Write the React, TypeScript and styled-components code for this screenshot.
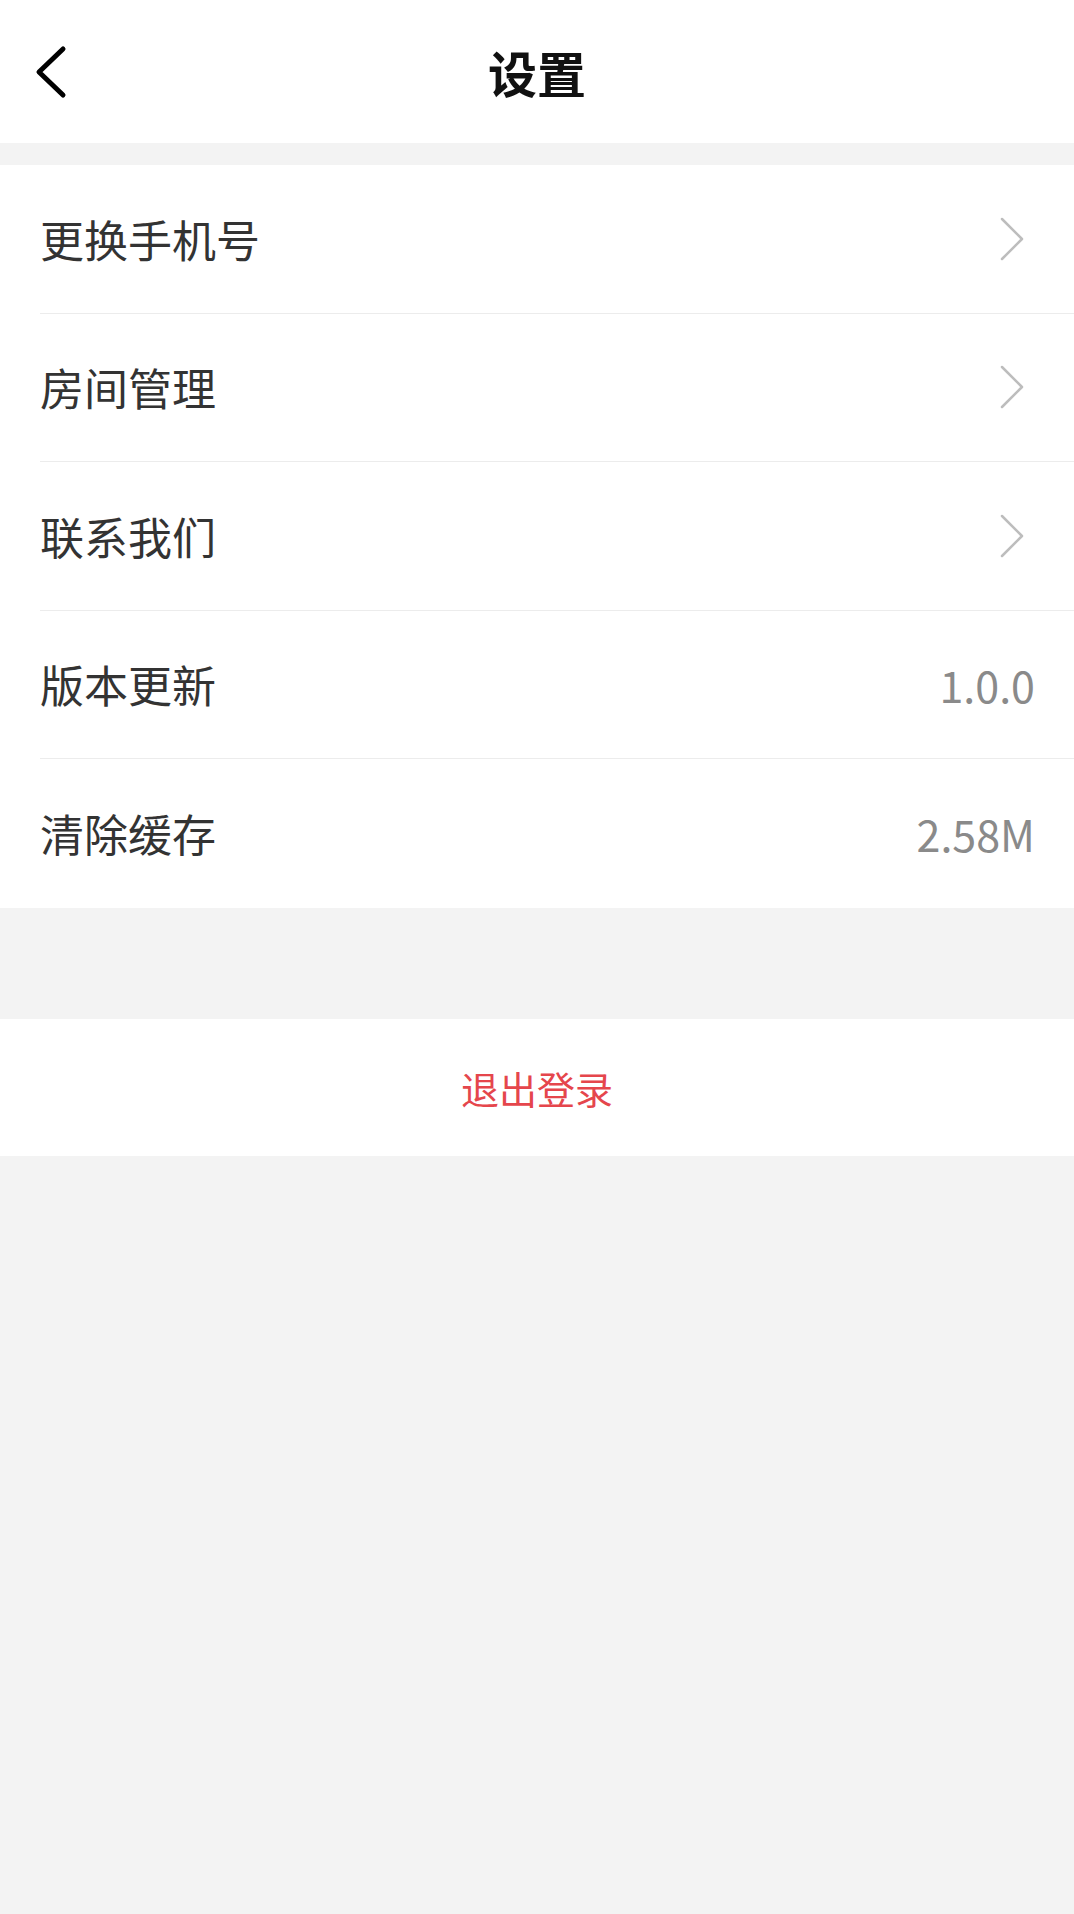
import React from "react";
import styled, { createGlobalStyle } from "styled-components";

const GlobalStyle = createGlobalStyle`
  html, body {
    margin: 0;
    padding: 0;
    background: #f3f3f3;
    font-family: "Noto Sans CJK SC", "Noto Sans", sans-serif;
  }
  * { box-sizing: border-box; }
`;

const Page = styled.div`
  width: 1074px;
  min-height: 1914px;
  background: #f3f3f3;
  display: flex;
  flex-direction: column;
`;

const Header = styled.header`
  height: 143px;
  background: #ffffff;
  display: grid;
  grid-template-columns: 120px 1fr 120px;
  align-items: center;
`;

const BackButton = styled.button`
  border: none;
  background: transparent;
  padding: 0 0 0 33px;
  height: 100%;
  display: flex;
  align-items: center;
  cursor: pointer;
`;

const Title = styled.h1`
  margin: 0;
  text-align: center;
  font-size: 49px;
  font-weight: 700;
  color: #111;
  line-height: 1;
`;

const List = styled.section`
  margin-top: 22px;
  background: #ffffff;
  display: flex;
  flex-direction: column;
`;

const Row = styled.div<{ $last?: boolean }>`
  height: 148.5px;
  margin-left: 40px;
  padding-right: 39px;
  display: flex;
  align-items: center;
  justify-content: space-between;
  border-bottom: ${(p) => (p.$last ? "none" : "1px solid #ececec")};
`;

const Label = styled.span`
  font-size: 44px;
  color: #333;
  line-height: 1;
`;

const Value = styled.span`
  font-size: 43px;
  color: #8a8a8a;
  line-height: 1;
`;

const Chevron = styled.svg`
  width: 26px;
  height: 44px;
  margin-right: 10px;
`;

const LogoutBar = styled.button`
  margin-top: 111px;
  height: 137px;
  width: 100%;
  border: none;
  background: #ffffff;
  font-family: "Noto Sans CJK SC", "Noto Sans", sans-serif;
  font-size: 38px;
  color: #e5464c;
  display: flex;
  align-items: center;
  justify-content: center;
  cursor: pointer;
`;

type Item = { label: string; value?: string };

const items: Item[] = [
  { label: "更换手机号" },
  { label: "房间管理" },
  { label: "联系我们" },
  { label: "版本更新", value: "1.0.0" },
  { label: "清除缓存", value: "2.58M" },
];

export default function App() {
  return (
    <Page>
      <GlobalStyle />
      <Header>
        <BackButton aria-label="返回">
          <svg width="34" height="54" viewBox="0 0 34 54">
            <path
              d="M30 4 L6 27 L30 50"
              fill="none"
              stroke="#000"
              strokeWidth="5"
              strokeLinecap="round"
              strokeLinejoin="round"
            />
          </svg>
        </BackButton>
        <Title>设置</Title>
        <div />
      </Header>
      <List>
        {items.map((it, i) => (
          <Row key={it.label} $last={i === items.length - 1}>
            <Label>{it.label}</Label>
            {it.value ? (
              <Value>{it.value}</Value>
            ) : (
              <Chevron viewBox="0 0 26 44">
                <path
                  d="M3 2 L23 22 L3 42"
                  fill="none"
                  stroke="#bdbdbd"
                  strokeWidth="2.5"
                  strokeLinecap="round"
                  strokeLinejoin="round"
                />
              </Chevron>
            )}
          </Row>
        ))}
      </List>
      <LogoutBar>退出登录</LogoutBar>
    </Page>
  );
}
